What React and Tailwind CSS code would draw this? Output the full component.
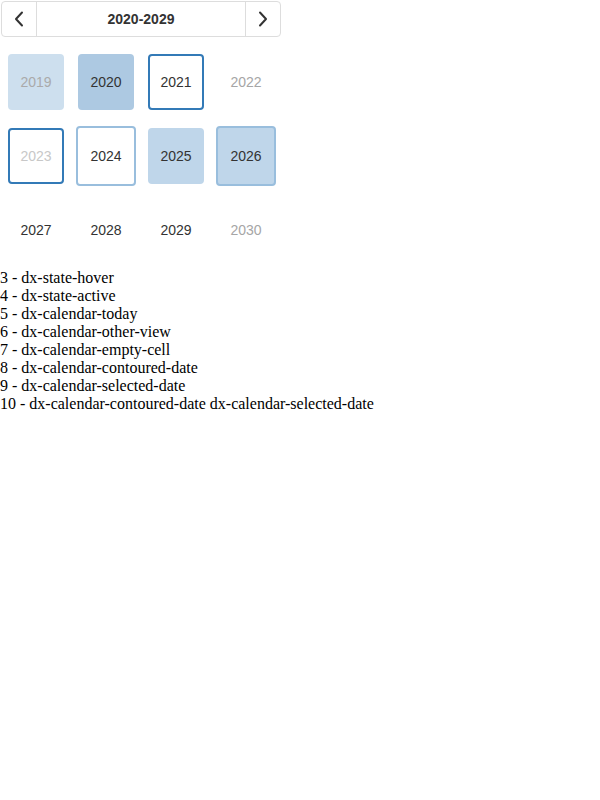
import React from "react";

const Chev = ({ dir }) => (
  <svg width="10" height="16" viewBox="0 0 10 16" fill="none">
    <path
      d={dir === "left" ? "M8 1.5 L2 8 L8 14.5" : "M2 1.5 L8 8 L2 14.5"}
      stroke="#333"
      strokeWidth="2"
      strokeLinecap="round"
      strokeLinejoin="round"
    />
  </svg>
);

const base =
  "w-[56px] h-[56px] flex items-center justify-center rounded-[4px] text-[14px] box-border";

const cells = [
  [
    { t: "2019", c: "bg-[#cddfee] text-[#aaaaaa]" },
    { t: "2020", c: "bg-[#adc9e2] text-[#333]" },
    { t: "2021", c: "border-2 border-[#337ab7] text-[#333]" },
    { t: "2022", c: "text-[#a6a6a6]" },
  ],
  [
    { t: "2023", c: "border-2 border-[#337ab7] text-[#c8c8c8]" },
    { t: "2024", c: "border-2 border-[#99bedd] text-[#333] !w-[60px] !h-[60px] -m-[2px]" },
    { t: "2025", c: "bg-[#bfd6ea] text-[#333]" },
    { t: "2026", c: "bg-[#bfd6ea] border-2 border-[#99bedd] text-[#333] !w-[60px] !h-[60px] -m-[2px]" },
  ],
  [
    { t: "2027", c: "text-[#333]" },
    { t: "2028", c: "text-[#333]" },
    { t: "2029", c: "text-[#333]" },
    { t: "2030", c: "text-[#a6a6a6]" },
  ],
];

const lines = [
  "3 - dx-state-hover",
  "4 - dx-state-active",
  "5 - dx-calendar-today",
  "6 - dx-calendar-other-view",
  "7 - dx-calendar-empty-cell",
  "8 - dx-calendar-contoured-date",
  "9 - dx-calendar-selected-date",
  "10 - dx-calendar-contoured-date dx-calendar-selected-date",
];

export default function App() {
  return (
    <div className="bg-white min-h-[800px]">
      <div className="w-[282px] pt-[1px] pl-[1px]" style={{ fontFamily: '"Liberation Sans", Arial, sans-serif' }}>
        <div className="w-[280px] h-[36px] border border-[#ddd] rounded-[4px] flex items-stretch box-border">
          <div className="w-[35px] flex items-center justify-center border-r border-[#ddd]">
            <Chev dir="left" />
          </div>
          <div className="flex-1 flex items-center justify-center text-[14px] font-bold text-[#333]">
            2020-2029
          </div>
          <div className="w-[35px] flex items-center justify-center border-l border-[#ddd]">
            <Chev dir="right" />
          </div>
        </div>
        <div className="pl-[7px] pt-[17px] flex flex-col gap-[18px]">
          {cells.map((row, i) => (
            <div key={i} className="flex gap-[14px]">
              {row.map((cell) => (
                <div key={cell.t} className={`${base} ${cell.c}`}>
                  {cell.t}
                </div>
              ))}
            </div>
          ))}
        </div>
      </div>
      <div
        className="mt-[11px] text-[16px] leading-[18px] text-black"
        style={{ fontFamily: '"Liberation Serif", "Times New Roman", serif' }}
      >
        {lines.map((l) => (
          <div key={l}>{l}</div>
        ))}
      </div>
    </div>
  );
}
